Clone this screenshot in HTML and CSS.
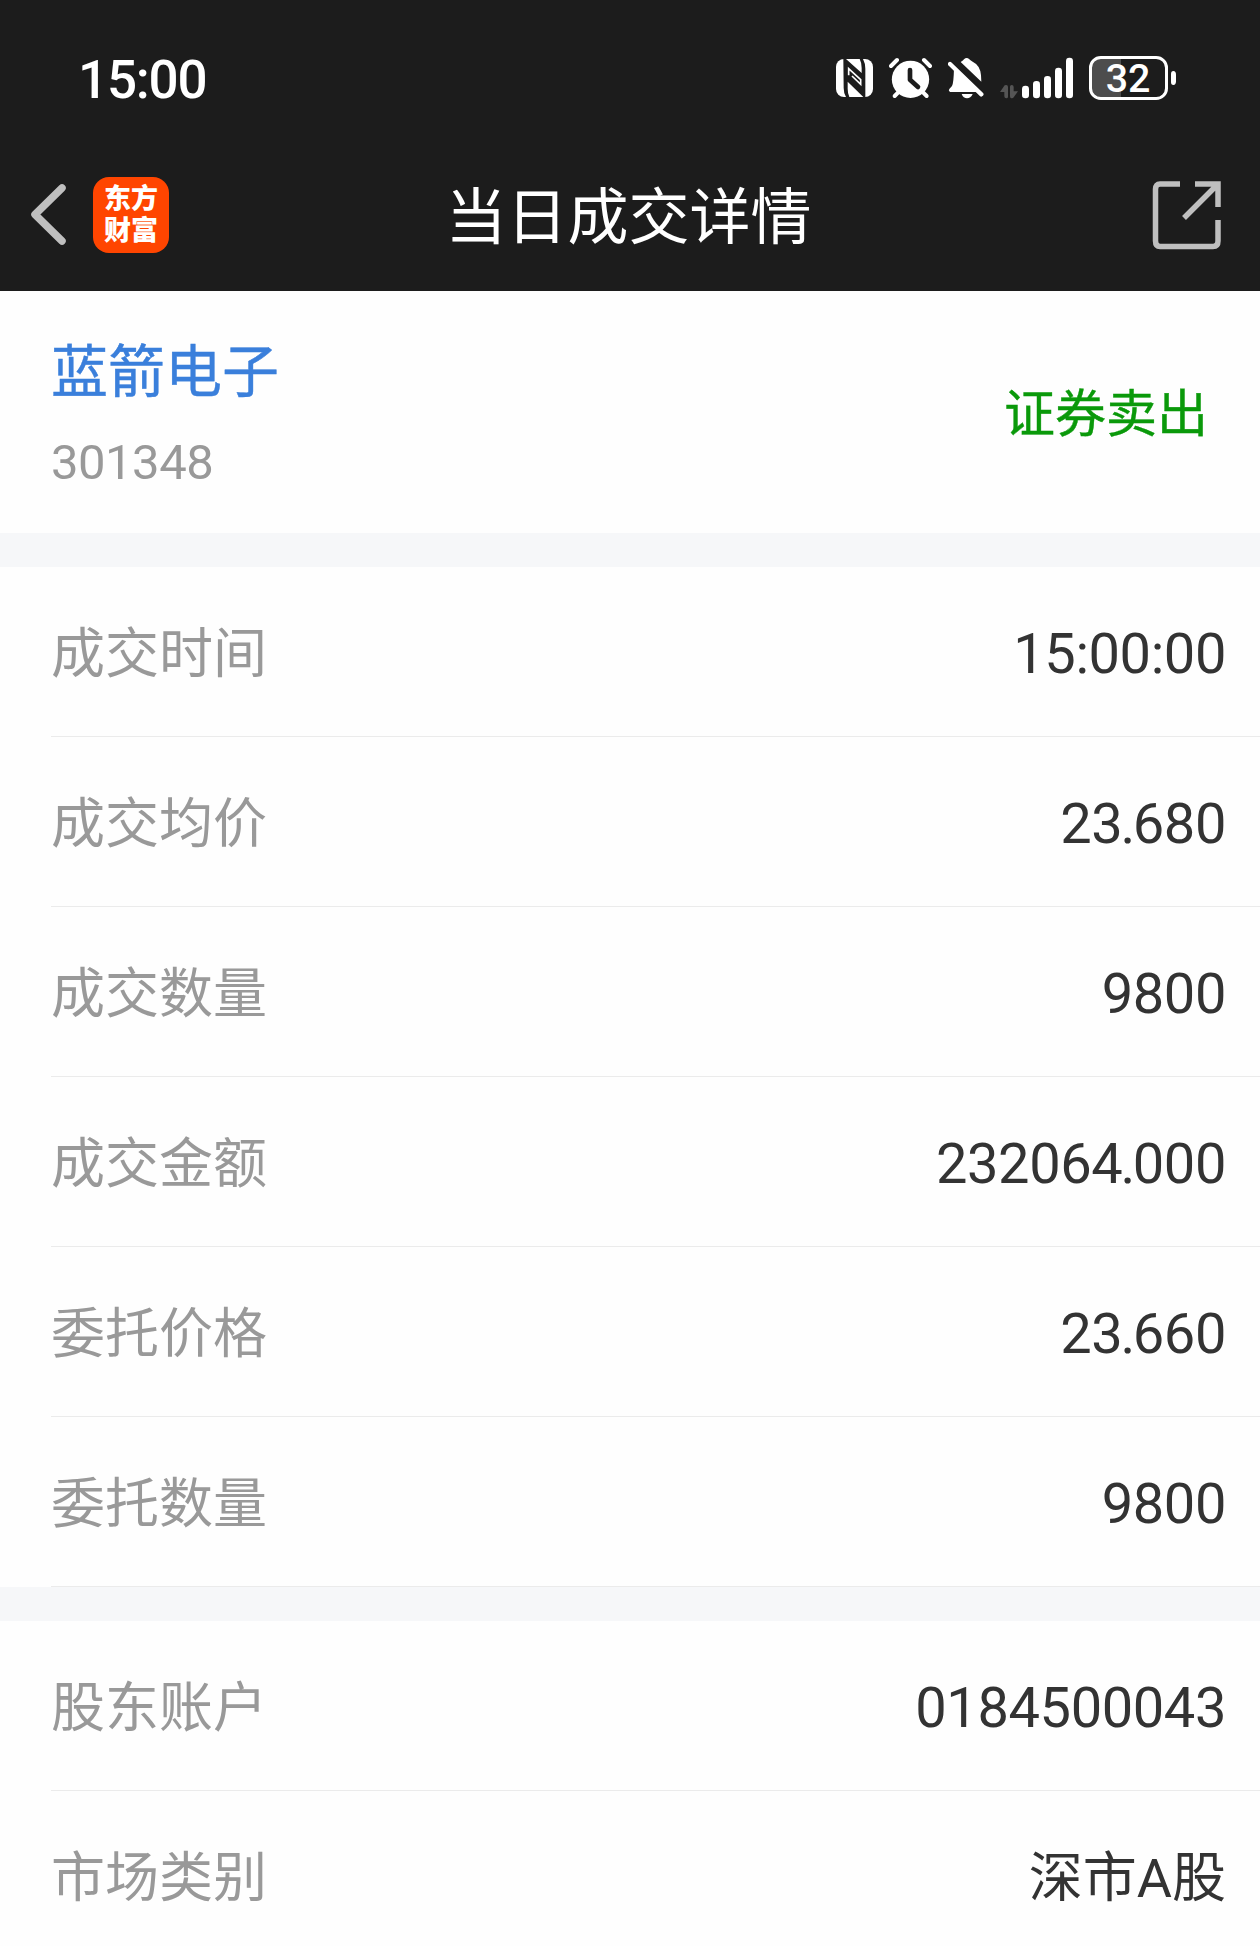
FILE: index.html
```html
<!DOCTYPE html>
<html lang="zh-CN">
<head>
  <meta charset="UTF-8">
  <meta name="viewport" content="width=device-width, initial-scale=1.0">
  <title>当日成交详情</title>
  <link rel="stylesheet" href="styles.css">
</head>
<body>
  <header class="header">
    <div class="status-bar">
      <span class="clock">15:00</span>
      <div class="status-icons">
        <!-- nfc -->
        <svg class="nfc" width="37" height="44" viewBox="48 48 111 132">
          <rect x="48" y="57" width="111" height="114" rx="24" fill="#fff"/>
          <path d="M70 57H78L125 99V84Q125 68 119 57H129Q136 70 136 86V171H130L83 125V146Q83 160 88 171H78Q71 160 71 144Z" fill="#1c1c1c"/>
          <path d="M86 106V86L122 119V133L96 108" fill="none" stroke="#fff" stroke-width="5"/>
        </svg>
        <!-- alarm -->
        <svg class="alarm" width="43" height="44" viewBox="207 48 129 132">
          <g stroke="#fff" stroke-width="12" stroke-linecap="round">
            <path d="M213 78L231 60M330 78L312 60"/>
            <path d="M224 168L240 152M320 168L304 152"/>
          </g>
          <circle cx="271.500" cy="118" r="56" fill="#fff"/>
          <path d="M270 90V119L294 141" fill="none" stroke="#1c1c1c" stroke-width="14" stroke-linecap="round" stroke-linejoin="round"/>
        </svg>
        <!-- muted bell -->
        <svg class="bell" width="36" height="44" viewBox="384 48 108 132">
          <path d="M422 66Q430 61 432 58Q440 50 448 58Q450 61 458 65Q481 76 483 106L484 125Z" fill="#fff"/>
          <path d="M402 84L466 146L476 156H390Q384 152 388 147L396 138Q401 130 402 84Z" fill="#fff"/>
          <path d="M425 162H458Q452 175 441 175Q430 175 425 162Z" fill="#fff"/>
          <path d="M390 72L484 163" stroke="#fff" stroke-width="13" stroke-linecap="round"/>
        </svg>
        <!-- data + signal -->
        <svg class="signal" width="73" height="44" viewBox="540 48 219 132">
          <path d="M540 156L554 136Q564 133 564 141V170Q564 175 559 175Q553 175 553 169V156ZM594 154L580 173Q570 178 570 169V140Q570 135 575 135Q581 135 581 141V154Z" fill="#555"/>
          <g fill="#fff">
            <rect x="606" y="137" width="21" height="38" rx="10"/>
            <rect x="639" y="123" width="21" height="52" rx="10"/>
            <rect x="672" y="108" width="21" height="67" rx="10"/>
            <rect x="705" y="83" width="21" height="92" rx="10"/>
            <rect x="738" y="53" width="21" height="122" rx="10"/>
          </g>
        </svg>
        <!-- battery -->
        <svg class="battery" width="88" height="52" viewBox="807 36 264 156">
          <path d="M903 54H840Q812 54 812 84V144Q812 174 840 174H903Z" fill="#4d4d4d"/>
          <rect x="811.500" y="52.500" width="228" height="123" rx="31" fill="none" stroke="#fff" stroke-width="9"/>
          <path d="M1053 102Q1053 93 1060 93Q1068 93 1068 104V124Q1068 135 1060 135Q1053 135 1053 126Z" fill="#fff"/>
          <text class="battery-text" x="924" y="156" text-anchor="middle">32</text>
        </svg>
      </div>
    </div>
    <div class="nav">
      <div class="nav-left">
        <svg class="back" width="38" height="64" viewBox="0 0 38 64">
          <path d="M33 5L6 31.500L33 58" fill="none" stroke="#bfbfbf" stroke-width="7.500" stroke-linecap="round" stroke-linejoin="round"/>
        </svg>
        <div class="logo"><span>东方</span><span>财富</span></div>
      </div>
      <h1 class="title">当日成交详情</h1>
      <svg class="share" width="70" height="70" viewBox="0 0 70 70">
        <g fill="none" stroke="#bfbfbf" stroke-width="5.500">
          <path d="M28 4H8Q3.500 4 3.500 9V61Q3.500 66.500 8 66.500H61Q66 66.500 66 61V40"/>
          <path d="M43 4H66V27M65 5L32 38"/>
        </g>
      </svg>
    </div>
  </header>

  <section class="stock">
    <div>
      <div class="stock-name">蓝箭电子</div>
      <div class="stock-code">301348</div>
    </div>
    <div class="direction">证券卖出</div>
  </section>

  <ul class="list">
    <li class="row"><span class="label">成交时间</span><span class="value">15:00:00</span></li>
    <li class="row"><span class="label">成交均价</span><span class="value">23<span class="dot">.</span>680</span></li>
    <li class="row"><span class="label">成交数量</span><span class="value">9800</span></li>
    <li class="row"><span class="label">成交金额</span><span class="value">232064<span class="dot">.</span>000</span></li>
    <li class="row"><span class="label">委托价格</span><span class="value">23<span class="dot">.</span>660</span></li>
    <li class="row"><span class="label">委托数量</span><span class="value">9800</span></li>
  </ul>

  <ul class="list">
    <li class="row"><span class="label">股东账户</span><span class="value">0184500043</span></li>
    <li class="row"><span class="label">市场类别</span><span class="value value-cn">深市A股</span></li>
  </ul>
</body>
</html>
```
FILE: styles.css
```css
* {
  box-sizing: border-box;
}

body {
  margin: 0;
  height: 1946px;
  overflow: hidden;
  background-color: #fefefe;
  font-family: Roboto, "Noto Sans CJK SC", sans-serif;
}

.header {
  height: 291px;
  background-color: #1c1c1c;
  color: #fff;
}

.status-bar {
  display: flex;
  justify-content: space-between;
  align-items: center;
  height: 138px;
  padding: 18px 83px 0 78px;
}

.clock {
  font-size: 53px;
  font-weight: 500;
  letter-spacing: -1.2px;
  line-height: 60px;
  padding-top: 3px;
}

.status-icons {
  display: flex;
  align-items: center;
  gap: 16px;
}

.battery-text {
  font-size: 118px;
  font-weight: 500;
  fill: #fff;
}

.nav {
  display: grid;
  grid-template-columns: 1fr auto 1fr;
  align-items: center;
  height: 153px;
  padding: 0 38px 0 29px;
}

.nav-left {
  display: flex;
  align-items: center;
  gap: 26px;
}

.logo {
  display: flex;
  flex-direction: column;
  justify-content: center;
  align-items: center;
  width: 76px;
  height: 76px;
  border-radius: 16px;
  background-color: #ff4500;
  font-size: 27px;
  font-weight: 900;
  line-height: 32px;
}

.title {
  margin: 0;
  padding: 6px 0 0 6px;
  font-size: 61px;
  font-weight: normal;
  line-height: 80px;
}

.share {
  justify-self: end;
}

.stock {
  display: flex;
  justify-content: space-between;
  align-items: center;
  height: 242px;
  padding: 12px 52px 0 51px;
}

.stock-name {
  font-size: 57px;
  line-height: 90px;
  color: #3a7fdb;
  -webkit-text-stroke: 0.4px #3a7fdb;
}

.stock-code {
  font-size: 49px;
  letter-spacing: -0.5px;
  line-height: 90px;
  color: #999;
}

.direction {
  padding-bottom: 6px;
  font-size: 51px;
  line-height: 70px;
  color: #0a990a;
  -webkit-text-stroke: 0.4px #0a990a;
}

.list {
  margin: 0;
  padding: 0;
  list-style: none;
  border-top: 34px solid #f6f7f9;
}

.row {
  display: flex;
  justify-content: space-between;
  align-items: center;
  height: 170px;
  padding: 0 34px 0 51px;
  background: linear-gradient(#ebebeb, #ebebeb) 51px 100% / 100% 1px no-repeat;
}

.label {
  padding-bottom: 6px;
  font-size: 54px;
  color: #999;
}

.value {
  padding-top: 4px;
  font-size: 56px;
  letter-spacing: -0.4px;
  color: #333;
}

.value-cn {
  padding: 0 0 6px;
  font-size: 54px;
  letter-spacing: 0;
}

.dot {
  margin: 0 -2px;
}
```
